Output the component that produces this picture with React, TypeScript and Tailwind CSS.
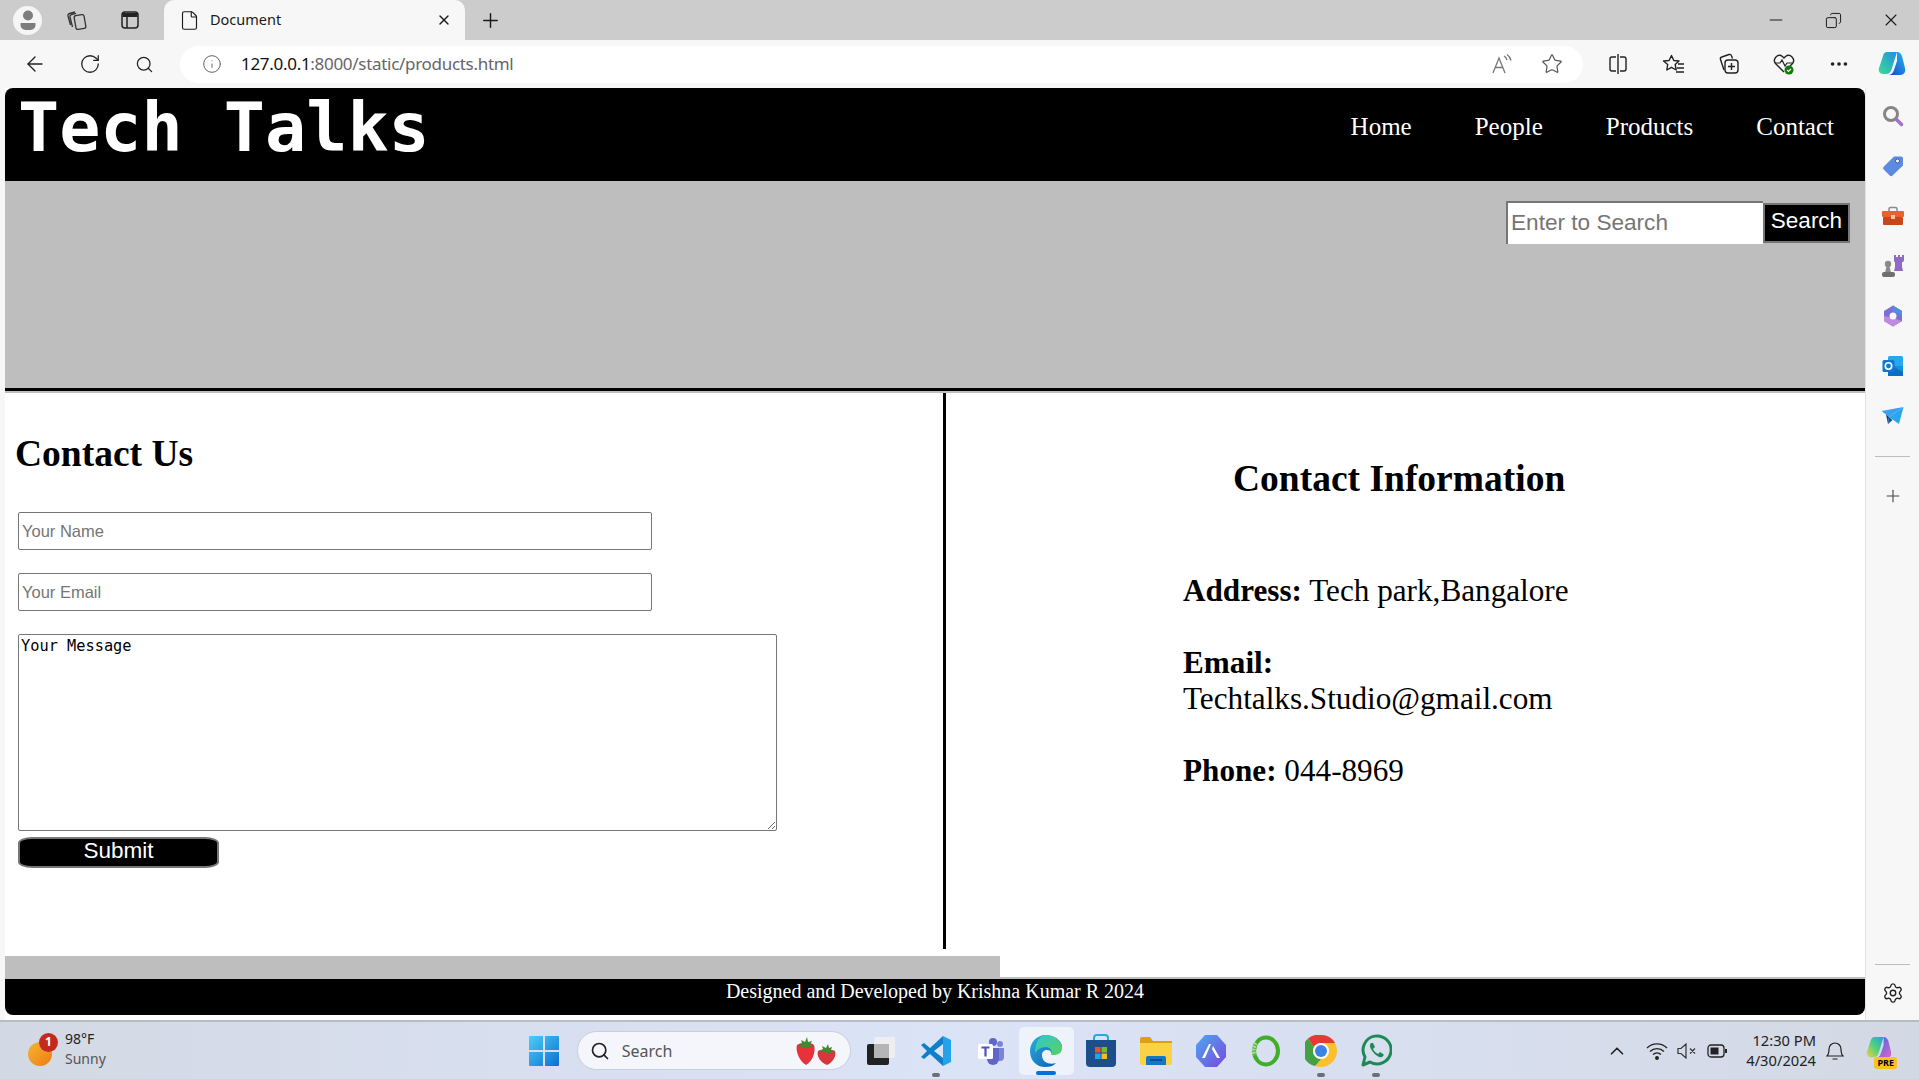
import {
  ArrowLeft,
  ChevronUp,
  Copy,
  Ellipsis,
  File,
  Info,
  Minus,
  Plus,
  RotateCw,
  Search,
  Settings,
  Star,
  X,
} from "lucide-react";

const serif = "font-['Liberation_Serif',serif]";
const sans = "font-['Liberation_Sans',sans-serif]";
const ui = "font-['Noto_Sans',sans-serif]";

const TabsIcon = () => (
  <svg width="22" height="22" viewBox="0 0 22 22" fill="none" stroke="#333" strokeWidth="1.3">
    <rect x="9" y="6" width="10" height="14" rx="2" transform="rotate(-10 14 13)" />
    <path d="M6.500 18 4 8a2 2 0 0 1 1.400-2.400L10 4.300M9 3 3.500 4.500A2 2 0 0 0 2 7l2.500 9" />
  </svg>
);

const VerticalTabsIcon = () => (
  <svg width="20" height="20" viewBox="0 0 20 20" fill="none" stroke="#222" strokeWidth="1.5">
    <rect x="2" y="2" width="16" height="16" rx="3" />
    <path d="M2.500 5h15" strokeWidth="4" />
    <path d="M7 6v12" />
  </svg>
);

const Profile = () => (
  <div className="flex h-[29px] w-[29px] items-center justify-center rounded-full bg-[#f5f5f5]">
    <svg width="20" height="22" viewBox="0 0 20 22" fill="#7d7d7d">
      <circle cx="10" cy="6.500" r="5" />
      <path d="M2.500 14h15v2a5 5 0 0 1-5 5h-5a5 5 0 0 1-5-5z" />
    </svg>
  </div>
);

const ReadAloud = () => (
  <svg width="22" height="22" viewBox="0 0 22 22" fill="none" stroke="#777" strokeWidth="1.3">
    <path d="M2 20 8 5l6 15M4.500 14.500h7" />
    <path d="M13 3a7 7 0 0 1 3 4M16 1.500a10 10 0 0 1 4 6" />
  </svg>
);

const SplitIcon = () => (
  <svg width="20" height="22" viewBox="0 0 20 22" fill="none" stroke="#222" strokeWidth="1.4">
    <path d="M8 4H4a2 2 0 0 0-2 2v10a2 2 0 0 0 2 2h4M12 4h4a2 2 0 0 1 2 2v10a2 2 0 0 1-2 2h-4M10 1v20" />
  </svg>
);

const FavoritesIcon = () => (
  <svg width="24" height="22" viewBox="0 0 24 22" fill="none" stroke="#222" strokeWidth="1.4">
    <path d="m9.500 2.500 2.300 5 5.200.5-3.800 3.500 1 5.500-4.700-2.700-4.700 2.700.9-5.500L1.500 8l5.600-.5z" strokeLinejoin="round" />
    <path d="M16 11h6M15 15h7M14 19h8" />
  </svg>
);

const CollectionsIcon = () => (
  <svg width="22" height="24" viewBox="0 0 22 24" fill="none" stroke="#222" strokeWidth="1.4">
    <path d="M6 18 2.500 7.500a2 2 0 0 1 1.300-2.500L11 2.500a2 2 0 0 1 2.500 1.300l1 2.700" />
    <rect x="7" y="8" width="13" height="13" rx="3" />
    <path d="M13.500 11v7M10 14.500h7" />
  </svg>
);

const HealthIcon = () => (
  <svg width="24" height="24" viewBox="0 0 24 24" fill="none">
    <path d="M12 20 3.500 11.500a5 5 0 0 1 7-7L12 6l1.500-1.500a5 5 0 0 1 7 7L18 14" stroke="#222" strokeWidth="1.4" />
    <path d="M3 11h5l2-3 3 6 2-3h5" stroke="#222" strokeWidth="1.2" />
    <circle cx="17" cy="18" r="4.500" fill="#107c10" />
    <path d="m15 18 1.500 1.500 2.500-2.500" stroke="#fff" strokeWidth="1.1" />
  </svg>
);

const CopilotIcon = () => (
  <svg width="30" height="30" viewBox="0 0 30 30">
    <defs>
      <linearGradient id="cpa" x1="0" y1="1" x2="1" y2="0">
        <stop offset="0" stopColor="#3ddc97" />
        <stop offset="1" stopColor="#1f8fe0" />
      </linearGradient>
      <linearGradient id="cpb" x1="0" y1="1" x2="1" y2="0">
        <stop offset="0" stopColor="#1546c8" />
        <stop offset="1" stopColor="#27b8ee" />
      </linearGradient>
    </defs>
    <path d="M10 3h10l-5 16c-1 4-3 6-6 6H6c-3 0-5-3-4-6l4-12c.6-2.500 2-4 4-4z" fill="url(#cpa)" />
    <path d="M20 3c3 0 4 2 5 4l3 12c1 4-1 7-5 7H11c3 0 5-2 6-5l3-9z" fill="url(#cpb)" />
  </svg>
);

const CopilotPre = () => (
  <div className="relative h-[30px] w-[30px]">
    <svg width="28" height="24" viewBox="0 0 30 26">
      <defs>
        <linearGradient id="pra" x1="0" y1="1" x2="1" y2="0">
          <stop offset="0" stopColor="#f0d040" />
          <stop offset="0.5" stopColor="#50d080" />
          <stop offset="1" stopColor="#20a0e8" />
        </linearGradient>
        <linearGradient id="prb" x1="0" y1="0" x2="1" y2="1">
          <stop offset="0" stopColor="#2070e8" />
          <stop offset="1" stopColor="#e860c8" />
        </linearGradient>
      </defs>
      <path d="M10 1h10l-5 16c-1 4-3 6-6 6H6c-3 0-5-3-4-6l4-12c.6-2.500 2-4 4-4z" fill="url(#pra)" />
      <path d="M20 1c3 0 4 2 5 4l3 12c1 4-1 7-5 7H11c3 0 5-2 6-5l3-9z" fill="url(#prb)" />
    </svg>
    <span className="absolute bottom-[-3px] right-[-2px] rounded-[3px] bg-[#f7c31c] px-[3px] text-[9px] font-bold leading-[12px] text-black">
      PRE
    </span>
  </div>
);

const SideSearch = () => (
  <svg width="22" height="22" viewBox="0 0 22 22" fill="none">
    <circle cx="9" cy="9" r="6.500" stroke="#858585" strokeWidth="3" />
    <path d="m14.500 14.500 5 5" stroke="#a070d0" strokeWidth="3.500" strokeLinecap="round" />
  </svg>
);

const TagIcon = () => (
  <svg width="22" height="22" viewBox="0 0 22 22">
    <path d="M12 1.500h7a2 2 0 0 1 2 2v7L10.500 20.500a2 2 0 0 1-2.800 0l-6-6a2 2 0 0 1 0-2.800z" fill="#5b8be0" />
    <circle cx="15.500" cy="6" r="2" fill="#fff" stroke="#3d50a8" />
  </svg>
);

const ToolboxIcon = () => (
  <svg width="24" height="20" viewBox="0 0 24 20">
    <path d="M8 5V3a1.500 1.500 0 0 1 1.500-1.500h5A1.500 1.500 0 0 1 16 3v2" fill="none" stroke="#8a8a8a" strokeWidth="1.500" />
    <rect x="1" y="5" width="22" height="6" rx="1" fill="#e8622c" />
    <rect x="2" y="11" width="20" height="8" rx="1" fill="#c8471a" />
    <rect x="10" y="9" width="4" height="4" fill="#f5c7a8" />
  </svg>
);

const GamesIcon = () => (
  <svg width="24" height="24" viewBox="0 0 24 24">
    <path d="M13 1h2v2h2V1h2v2h2V1h2v6l-2 1.500V13l1 4H13l1-4V8.500L13 7z" fill="#8f6cc4" />
    <circle cx="7" cy="10" r="3.200" fill="#8a8a8a" />
    <path d="M5.500 12.500h3l1.500 6H4z" fill="#8a8a8a" />
    <rect x="1" y="18" width="13" height="5" rx="2" fill="#707070" />
  </svg>
);

const M365Icon = () => (
  <svg width="22" height="24" viewBox="0 0 22 24" fill="none">
    <path d="M11 1.500 20 7v10l-9 5.500L2 17V7z" fill="#7b6fd6" />
    <path d="M11 1.500 20 7v5l-5-3-4-1z" fill="#4f8ee0" />
    <path d="M2 12v5l9 5.500 9-5.500-6-2z" fill="#c08adf" />
    <circle cx="11" cy="12" r="3.500" fill="#f7f7f7" />
  </svg>
);

const OutlookIcon = () => (
  <svg width="22" height="22" viewBox="0 0 22 22">
    <rect x="6" y="1" width="15" height="20" rx="1.500" fill="#28a8ea" />
    <path d="M6 11h15v10H6z" fill="#0a6fc2" />
    <path d="m10 11 11 6v-6z" fill="#1490df" />
    <rect x="0.500" y="5" width="12" height="12" rx="1.500" fill="#0f78d4" />
    <circle cx="6.500" cy="11" r="3.200" fill="none" stroke="#fff" strokeWidth="1.600" />
  </svg>
);

const SendIcon = () => (
  <svg width="23" height="20" viewBox="0 0 23 20">
    <path d="M0.500 5 22.500 1 8 11z" fill="#3aa0ef" />
    <path d="M8 11 22.500 1 18 18z" fill="#2aa5ee" />
    <path d="M5 8.500 8 11l-1 7-2-9.500z" fill="#0e3f8a" />
    <path d="m8 11 3.500 3L7 18z" fill="#134f9e" />
  </svg>
);

const WeatherIcon = () => (
  <div className="relative h-[30px] w-[30px]">
    <div className="absolute bottom-0 left-[2px] h-[24px] w-[24px] rounded-full bg-gradient-to-br from-[#f2b632] to-[#ee7a12]" />
    <div className="absolute right-[-2px] top-[-3px] flex h-[19px] w-[19px] items-center justify-center rounded-full bg-[#c42b1c] text-[12px] font-bold text-white">
      1
    </div>
  </div>
);

const WindowsLogo = () => (
  <svg width="30" height="30" viewBox="0 0 30 30">
    <defs>
      <linearGradient id="win" x1="0" y1="0" x2="1" y2="1">
        <stop offset="0" stopColor="#4dcdf8" />
        <stop offset="1" stopColor="#0a70d0" />
      </linearGradient>
    </defs>
    <path d="M0 1a1 1 0 0 1 1-1h13v14H0zM16 0h13a1 1 0 0 1 1 1v13H16zM0 16h14v14H1a1 1 0 0 1-1-1zM16 16h14v13a1 1 0 0 1-1 1H16z" fill="url(#win)" />
  </svg>
);

const Strawberries = () => (
  <svg width="42" height="30" viewBox="0 0 42 30">
    <path d="M2 9c4-3 14-3 17 0 2 6-1 16-8 20C5 26 0 15 2 9z" fill="#e5323b" />
    <path d="M23 15c3-2 14-2 17 0 2 5-3 12-8 14-6-2-11-9-9-14z" fill="#d8363c" />
    <path d="m3 10 4-3-1-3 4 2 2-5 1 5 4-1-2 4 3 2-7 1z" fill="#3f8a2c" />
    <path d="m24 15 4-2-1-3 4 2 2-4 1 4 3-1-1 3 4 2-7 1z" fill="#3f8a2c" />
  </svg>
);

const TaskView = () => (
  <svg width="30" height="30" viewBox="0 0 30 30">
    <rect x="1" y="8" width="22" height="21" rx="2" fill="#222" />
    <rect x="8" y="1" width="21" height="21" rx="2" fill="#f0f0f0" opacity="0.9" />
    <rect x="8" y="8" width="15" height="14" fill="#b5b5b5" />
  </svg>
);

const VsCode = () => (
  <svg width="32" height="32" viewBox="0 0 32 32">
    <path d="M23 1v8l-9 7 9 7v8L10 19l-6 5-3-2 6-6-6-6 3-2 6 5z" fill="#0f7fcc" />
    <path d="M23 1 31 5v22l-8 4z" fill="#23a3ea" />
  </svg>
);

const Teams = () => (
  <svg width="30" height="30" viewBox="0 0 30 30">
    <circle cx="24" cy="8" r="3" fill="#7b83d8" />
    <circle cx="17" cy="6" r="4" fill="#5e66c8" />
    <path d="M20 12h8v9a4 4 0 0 1-8 0z" fill="#7b83d8" />
    <path d="M11 12h12v11a6 6 0 0 1-12 0z" fill="#5e66c8" />
    <rect x="2" y="8" width="15" height="15" rx="1.500" fill="#fff" />
    <path d="M5.500 11.500h8M9.500 11.500v9" stroke="#4b53bc" strokeWidth="2.200" />
  </svg>
);

const Edge = () => (
  <svg width="32" height="34" viewBox="0 0 32 34">
    <defs>
      <linearGradient id="edgeb" x1="0" y1="0" x2="1" y2="1">
        <stop offset="0" stopColor="#2cb0dc" />
        <stop offset="1" stopColor="#0c58b0" />
      </linearGradient>
      <linearGradient id="edgeg" x1="0" y1="0" x2="1" y2="1">
        <stop offset="0" stopColor="#30c8d0" />
        <stop offset="1" stopColor="#58d060" />
      </linearGradient>
    </defs>
    <path d="M16 1C6 1 0 9 0 17c0 10 7 16 15 16 5 0 8-1 11-4-6 2-14 0-14-8 0-3 2-5 5-5s4 1 4 3c4 0 10-1 11-7C31 6 24 1 16 1z" fill="url(#edgeb)" />
    <path d="M16 1c8 0 16 6 16 13 0 5-4 7-8 7h-3c2-4-1-8-5-8-6 0-9 3-11 6C5 8 10 1 16 1z" fill="url(#edgeg)" />
  </svg>
);

const StoreIcon = () => (
  <svg width="30" height="34" viewBox="0 0 30 34">
    <path d="M8 8V4a3 3 0 0 1 3-3h8a3 3 0 0 1 3 3v4" fill="none" stroke="#28a8e0" strokeWidth="2" />
    <path d="M0 6h30v23a4 4 0 0 1-4 4H4a4 4 0 0 1-4-4z" fill="#1c4f8a" />
    <rect x="9" y="13" width="5.500" height="5.500" fill="#e8532a" />
    <rect x="15.500" y="13" width="5.500" height="5.500" fill="#7eb82e" />
    <rect x="9" y="19.500" width="5.500" height="5.500" fill="#1fa8e8" />
    <rect x="15.500" y="19.500" width="5.500" height="5.500" fill="#f8bb1c" />
  </svg>
);

const Folder = () => (
  <svg width="32" height="28" viewBox="0 0 32 28">
    <path d="M0 2a2 2 0 0 1 2-2h8l3 4h19v4H0z" fill="#d9a018" />
    <path d="M0 6h32v20a2 2 0 0 1-2 2H2a2 2 0 0 1-2-2z" fill="#fbd145" />
    <path d="M6 21a2 2 0 0 1 2-2h16a2 2 0 0 1 2 2v7H6z" fill="#1577c4" />
    <rect x="10" y="22" width="12" height="2" fill="#0b4f90" />
  </svg>
);

const ArcIcon = () => (
  <svg width="30" height="34" viewBox="0 0 30 34">
    <defs>
      <linearGradient id="arc" x1="0" y1="0" x2="1" y2="1">
        <stop offset="0" stopColor="#4ca8ee" />
        <stop offset="1" stopColor="#7a48e0" />
      </linearGradient>
    </defs>
    <path d="M9 1h12l9 10v12l-9 10H9L0 23V11z" fill="url(#arc)" />
    <path d="m6 24 7-14h2L9 24zM17 12l7 12h-3l-5-9z" fill="#fff" />
  </svg>
);

const RingIcon = () => (
  <svg width="32" height="32" viewBox="0 0 32 32" fill="none">
    <ellipse cx="16" cy="16" rx="12" ry="13.500" stroke="#3fae29" strokeWidth="4" />
    <path d="M6 8a13 13 0 0 0-1.500 12" stroke="#a8dc98" strokeWidth="4" strokeDasharray="2 1" />
  </svg>
);

const Chrome = () => (
  <svg width="32" height="32" viewBox="0 0 32 32">
    <circle cx="16" cy="16" r="16" fill="#fbc02d" />
    <path d="M16 0a16 16 0 0 1 14 8H16a8 8 0 0 0-7 4L3 3.500A16 16 0 0 1 16 0z" fill="#e53935" />
    <path d="M3 3.500 9 12a8 8 0 0 0 7 12l-6 7A16 16 0 0 1 3 3.500z" fill="#43a047" />
    <circle cx="16" cy="16" r="8" fill="#fff" />
    <circle cx="16" cy="16" r="6" fill="#3b82e8" />
  </svg>
);

const WhatsApp = () => (
  <svg width="32" height="34" viewBox="0 0 32 34" fill="none">
    <path d="M3 31 5 23a14 14 0 1 1 5 5z" stroke="#1d8a55" strokeWidth="3" strokeLinejoin="round" />
    <path d="M11 9c-2 2-1 5 2 9s7 6 9 5c2-1 2-3 1-3l-3-2-2 2c-2-1-4-3-5-5l2-2-2-4z" fill="#1d8a55" />
  </svg>
);

const Dot = () => <span className="h-[4px] w-[8px] rounded-full bg-[#6b6f76]" />;

const taskbarApps = [
  { icon: <TaskView />, dot: false },
  { icon: <VsCode />, dot: true },
  { icon: <Teams />, dot: false },
  { icon: <Edge />, dot: false, active: true },
  { icon: <StoreIcon />, dot: false },
  { icon: <Folder />, dot: false },
  { icon: <ArcIcon />, dot: false },
  { icon: <RingIcon />, dot: false },
  { icon: <Chrome />, dot: true },
  { icon: <WhatsApp />, dot: true },
];

const sidebarIcons = [
  <SideSearch />,
  <TagIcon />,
  <ToolboxIcon />,
  <GamesIcon />,
  <M365Icon />,
  <OutlookIcon />,
  <SendIcon />,
];

const BrowserChrome = () => (
  <>
    <div className="flex h-[40px] shrink-0 items-center bg-[#cccccc] text-[#1a1a1a]">
      <div className="ml-[13px]">
        <Profile />
      </div>
      <div className="ml-[24px]">
        <TabsIcon />
      </div>
      <div className="ml-[32px]">
        <VerticalTabsIcon />
      </div>
      <div className={`ml-[24px] flex h-[40px] w-[301px] items-center rounded-t-[10px] bg-[#f7f7f7] pl-[15px] pr-[13px] ${ui}`}>
        <File size={21} strokeWidth={1.3} />
        <span className="ml-[10px] flex-1 pb-[1px] text-[14.500px]">Document</span>
        <X size={16} strokeWidth={2} />
      </div>
      <Plus size={23} strokeWidth={1.5} className="ml-[14px]" />
      <div className="ml-auto flex items-center gap-[39px] pr-[18px]">
        <Minus size={20} strokeWidth={1.3} />
        <Copy size={17} strokeWidth={1.4} className="scale-x-[-1]" />
        <X size={20} strokeWidth={1.3} />
      </div>
    </div>
    <div className="flex h-[48px] shrink-0 items-center bg-[#f7f7f7] text-[#222]">
      <ArrowLeft size={24} strokeWidth={1.4} className="ml-[23px]" />
      <RotateCw size={22} strokeWidth={1.4} className="ml-[32px]" />
      <Search size={19} strokeWidth={1.6} className="ml-[34px]" />
      <div className="ml-[26px] flex h-[37px] w-[1403px] items-center rounded-full bg-white pl-[22px] pr-[20px]">
        <Info size={20} strokeWidth={1.2} color="#666" />
        <span className={`ml-[19px] flex-1 pb-[1px] text-[17px] tracking-[-0.3px] text-[#666] ${ui}`}>
          <span className="text-[#111]">127.0.0.1</span>:8000/static/products.html
        </span>
        <ReadAloud />
        <Star size={22} strokeWidth={1.3} color="#555" className="ml-[28px]" />
      </div>
      <div className="ml-[25px]">
        <SplitIcon />
      </div>
      <div className="ml-[34px]">
        <FavoritesIcon />
      </div>
      <div className="ml-[32px]">
        <CollectionsIcon />
      </div>
      <div className="ml-[32px]">
        <HealthIcon />
      </div>
      <Ellipsis size={22} strokeWidth={2} className="ml-[32px]" />
      <div className="ml-[27px]">
        <CopilotIcon />
      </div>
    </div>
  </>
);

const Sidebar = () => (
  <aside className="flex w-[54px] shrink-0 flex-col items-center border-l border-[#e3e3e3] bg-[#f7f7f7]">
    <div className="mt-[1px] flex flex-col items-center pt-[2px]">
      {sidebarIcons.map((icon, i) => (
        <div key={i} className="flex h-[50px] w-full items-center justify-center">
          {icon}
        </div>
      ))}
    </div>
    <div className="mt-[15px] h-px w-[35px] bg-[#bdbdbd]" />
    <Plus size={20} strokeWidth={1.3} color="#444" className="mt-[29px]" />
    <div className="mt-auto h-px w-[35px] bg-[#bdbdbd]" />
    <Settings size={22} strokeWidth={1.5} color="#222" className="mb-[16px] mt-[17px]" />
  </aside>
);

const Taskbar = () => (
  <div className={`flex h-[59px] shrink-0 items-center border-t-2 border-[#b8bcc4] bg-gradient-to-r from-[#d3d9e4] via-[#dbe3f7] to-[#d3d9e4] ${ui}`}>
    <div className="ml-[26px] flex items-center">
      <WeatherIcon />
      <div className="ml-[9px] pb-[3px] text-[14px] leading-[20px] text-[#222]">
        <div>98°F</div>
        <div className="text-[#555]">Sunny</div>
      </div>
    </div>
    <div className="ml-[423px]">
      <WindowsLogo />
    </div>
    <div className="ml-[18px] flex h-[39px] w-[274px] items-center rounded-full border border-[#c8cede] bg-[#f4f6fc] pl-[12px] pr-[13px]">
      <Search size={20} strokeWidth={2} color="#222" />
      <span className="ml-[12px] flex-1 text-[16px] text-[#555]">Search</span>
      <Strawberries />
    </div>
    <div className="ml-[3px] flex items-center">
      {taskbarApps.map((app, i) => (
        <div
          key={i}
          className={`relative flex h-[48px] w-[55px] items-center justify-center rounded-[5px] ${app.active ? "bg-[#eef2fb]" : ""}`}
        >
          {app.icon}
          {app.dot && (
            <span className="absolute bottom-[-2px] flex">
              <Dot />
            </span>
          )}
          {app.active && <span className="absolute bottom-0 h-[4px] w-[20px] rounded-full bg-[#0a6fd0]" />}
        </div>
      ))}
    </div>
    <div className="ml-auto flex items-center">
      <ChevronUp size={22} strokeWidth={1.8} color="#222" />
      <svg width="22" height="18" viewBox="0 0 22 18" fill="none" stroke="#222" strokeWidth="1.3" className="ml-[18px]">
        <path d="M1 6a14 14 0 0 1 20 0M4 9.500a10 10 0 0 1 14 0M7 12.500a6 6 0 0 1 8 0" />
        <circle cx="11" cy="16" r="1.300" fill="#222" />
      </svg>
      <svg width="20" height="16" viewBox="0 0 20 16" fill="none" stroke="#333" strokeWidth="1.2" className="ml-[9px]">
        <path d="M1 5.500h3L9 1v14l-5-4.500H1zM13 5.500l5 5M18 5.500l-5 5" />
      </svg>
      <svg width="21" height="14" viewBox="0 0 21 14" fill="none" stroke="#222" strokeWidth="1.3" className="ml-[10px]">
        <rect x="1" y="1" width="16" height="12" rx="3" />
        <rect x="3.500" y="3.500" width="8" height="7" fill="#222" stroke="none" />
        <path d="M19 5v4" strokeWidth="2" />
      </svg>
      <div className="ml-[18px] pb-[2px] text-right text-[14.700px] leading-[20px] text-[#222]">
        <div>12:30 PM</div>
        <div>4/30/2024</div>
      </div>
      <svg width="18" height="20" viewBox="0 0 18 20" fill="none" stroke="#222" strokeWidth="1.200" className="ml-[10px]">
        <path d="M1 15c2-2 2-4 2-7a6 6 0 0 1 12 0c0 3 0 5 2 7zM6.500 18h5" />
      </svg>
      <div className="ml-[21px] mr-[24px]">
        <CopilotPre />
      </div>
    </div>
  </div>
);

const TechTalksPage = () => (
  <main className="flex min-w-0 flex-1 flex-col bg-white">
    <header className="flex h-[93px] shrink-0 items-start justify-between rounded-t-[8px] bg-black pl-[13px] pr-[31px] text-white">
      <h1 className="text-[68.400px] font-bold leading-[80px] font-['DejaVu_Sans_Mono',monospace]">Tech Talks</h1>
      <nav className={`flex gap-[63px] pt-[24px] text-[25px] leading-[30px] ${serif}`}>
        <a>Home</a>
        <a>People</a>
        <a>Products</a>
        <a>Contact</a>
      </nav>
    </header>
    <div className="flex h-[207px] shrink-0 items-start justify-end bg-[#bebebe] pr-[15px] pt-[20px]">
      <input
        placeholder="Enter to Search"
        className={`h-[43px] w-[257px] border-2 border-b-0 border-r-0 border-[#767676] bg-white px-[3px] pb-[2px] text-[22.600px] outline-none placeholder:text-[#757575] ${sans}`}
      />
      <button className={`mt-[2px] h-[40px] w-[87px] border-2 border-[#767676] bg-black pb-[3px] text-[22.500px] leading-none text-white ${sans}`}>
        Search
      </button>
    </div>
    <div className="h-[3px] shrink-0 bg-black" />
    <div className="h-[2px] shrink-0 bg-[#bebebe]" />

    <div className="flex h-[563px] shrink-0 bg-white">
      <section className="h-[556px] w-[941px] shrink-0 border-r-[3px] border-black pl-[13px] pt-[40px]">
        <h2 className={`ml-[-3px] text-[37.500px] font-bold leading-[42px] text-black ${serif}`}>Contact Us</h2>
        <form className="mt-[37px] flex flex-col items-start">
          <input
            placeholder="Your Name"
            className={`h-[38px] w-[634px] rounded-[2px] border border-[#767676] px-[3px] text-[16.500px] outline-none placeholder:text-[#757575] ${sans}`}
          />
          <input
            placeholder="Your Email"
            className={`mt-[23px] h-[38px] w-[634px] rounded-[2px] border border-[#767676] px-[3px] text-[16.500px] outline-none placeholder:text-[#757575] ${sans}`}
          />
          <textarea
            defaultValue="Your Message"
            className="mt-[23px] h-[197px] w-[759px] rounded-[2px] border border-[#767676] px-[2px] py-[1px] text-[15.300px] leading-[20px] text-black outline-none font-['DejaVu_Sans_Mono',monospace]"
          />
          <button
            type="button"
            className={`mt-[6px] h-[31px] w-[201px] rounded-[14px/6px] border-2 border-[#767676] bg-black pb-[2px] text-[22.500px] leading-none text-white ${sans}`}
          >
            Submit
          </button>
        </form>
      </section>
      <section className={`flex-1 pt-[65px] text-black ${serif}`}>
        <h2 className="ml-[287px] text-[37.500px] font-bold leading-[42px]">Contact Information</h2>
        <div className="ml-[237px] mt-[73px] w-[400px] text-[31.200px] leading-[36px]">
          <p>
            <b>Address:</b> Tech park,Bangalore
          </p>
          <p className="mt-[36px]">
            <b>Email:</b> Techtalks.Studio@gmail.com
          </p>
          <p className="mt-[36px]">
            <b>Phone:</b> 044-8969
          </p>
        </div>
      </section>
    </div>

    <div className="h-[21px] w-[995px] shrink-0 bg-[#bebebe]" />
    <div className="h-[2px] shrink-0 bg-[#bebebe]" />
    <footer className={`h-[36px] shrink-0 rounded-b-[8px] bg-black text-center text-[20px] leading-[24px] text-white ${serif}`}>
      Designed and Developed by Krishna Kumar R 2024
    </footer>
  </main>
);

export default function App() {
  return (
    <div className="flex h-[1079px] w-[1919px] flex-col overflow-hidden bg-[#f7f7f7]">
      <BrowserChrome />
      <div className="flex h-[932px] shrink-0">
        <div className="w-[5px] shrink-0 bg-[#f7f7f7]" />
        <TechTalksPage />
        <Sidebar />
      </div>
      <div className="flex-1" />
      <Taskbar />
    </div>
  );
}
